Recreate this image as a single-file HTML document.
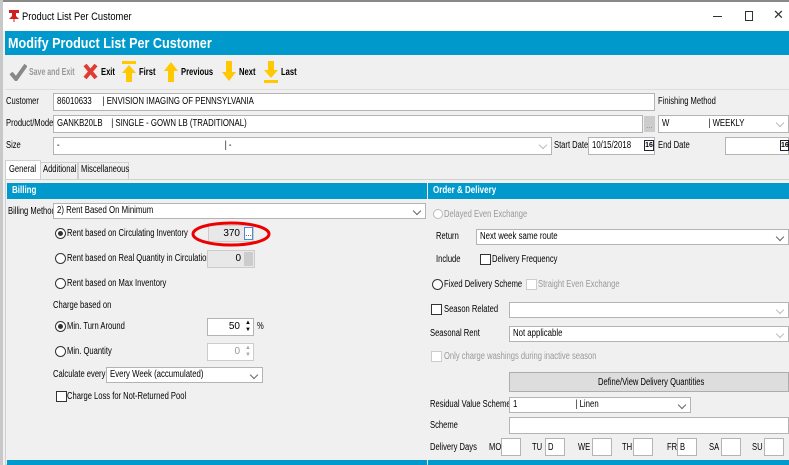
<!DOCTYPE html><html><head><style>
*{box-sizing:border-box;margin:0;padding:0}
body{width:789px;height:465px;overflow:hidden;background:#f0f0f0;font-family:"Liberation Sans",sans-serif;font-size:10px;color:#000;position:relative}
.a{position:absolute}
.t{position:absolute;white-space:nowrap;line-height:12px;transform:scaleX(.76);transform-origin:0 50%}
.in{position:absolute;background:#fff;border:1px solid #b4b4b4;height:18px}
.in span{position:absolute;left:3px;top:2px;white-space:nowrap;line-height:12px;transform:scaleX(.78);transform-origin:0 50%}
.dd:after{content:"";position:absolute;right:5px;top:4px;width:5px;height:5px;border-right:1px solid #666;border-bottom:1px solid #666;transform:rotate(45deg)}
.dd.g:after{border-color:#bbb}
.rb{position:absolute;width:11px;height:11px;border:1px solid #333;border-radius:50%;background:#fff}
.rb.on:after{content:"";position:absolute;left:2px;top:2px;width:5px;height:5px;border-radius:50%;background:#333}
.cb{position:absolute;width:11px;height:11px;border:1px solid #333;background:#fff}
.hdr{position:absolute;background:#0099cc;color:#fff;font-weight:bold;height:16px}
.hdr span{position:absolute;left:5px;top:2px;line-height:12px;transform:scaleX(.8);transform-origin:0 50%}
.g2{color:#999}
.bx{position:absolute;background:#fff;border:1px solid #b4b4b4;width:20px;height:18px;top:438px}
</style></head><body>
<div class="a" style="left:0;top:0;width:789px;height:31px;background:#fff;border-top:2px solid #888"></div>
<div class="a" style="left:0;top:0;width:3px;height:465px;background:#c8c8c8"></div>
<svg class="a" style="left:8px;top:9px" width="12" height="13"><path d="M1 1h10v3H8v3l3 3H1l3-3V4H1z" fill="#d02020"/><path d="M6 10v3" stroke="#d02020"/></svg>
<div class="t" style="left:22px;top:11px;font-size:11px;transform:scaleX(.85)">Product List Per Customer</div>
<div class="a" style="left:713px;top:16px;width:9px;height:1px;background:#333"></div>
<div class="a" style="left:745px;top:11px;width:8px;height:10px;border:1px solid #333"></div>
<div class="t" style="left:773px;top:9px;font-size:13px;transform:none;color:#333">✕</div>
<div class="a" style="left:5px;top:31px;width:784px;height:24px;background:#0099cc"></div>
<div class="t" style="left:8px;top:36px;font-size:15px;line-height:16px;font-weight:bold;color:#fff;transform:scaleX(.84)">Modify Product List Per Customer</div>
<svg class="a" style="left:9px;top:63px" width="18" height="18"><path d="M2 10l5 6L17 2" stroke="#888" stroke-width="4" fill="none"/></svg>
<div class="t g2" style="left:29px;top:67px;font-weight:bold;transform:scaleX(.7)">Save and Exit</div>
<svg class="a" style="left:83px;top:63px" width="15" height="17"><path d="M2 2l11 13M13 2L2 15" stroke="#e03c31" stroke-width="4"/></svg>
<div class="t" style="left:101px;top:67px;font-weight:bold">Exit</div>
<svg class="a" style="left:121px;top:60px" width="16" height="23"><rect x="1" y="1" width="14" height="3" fill="#ffc800"/><path d="M8 5l7 8h-4v9H5v-9H1z" fill="#ffc800"/></svg>
<div class="t" style="left:139px;top:67px;font-weight:bold">First</div>
<svg class="a" style="left:163px;top:61px" width="16" height="22"><path d="M8 1l7 9h-4v11H5V10H1z" fill="#ffc800"/></svg>
<div class="t" style="left:181px;top:67px;font-weight:bold">Previous</div>
<svg class="a" style="left:221px;top:60px" width="16" height="22"><path d="M8 21l7-9h-4V1H5v11H1z" fill="#ffc800"/></svg>
<div class="t" style="left:239px;top:67px;font-weight:bold">Next</div>
<svg class="a" style="left:263px;top:60px" width="16" height="24"><path d="M8 18l7-8h-4V1H5v9H1z" fill="#ffc800"/><rect x="1" y="20" width="14" height="3" fill="#ffc800"/></svg>
<div class="t" style="left:281px;top:67px;font-weight:bold">Last</div>
<div class="a" style="left:5px;top:89px;width:784px;height:1px;background:#ddd"></div>
<div class="t" style="left:6px;top:96px">Customer</div>
<div class="in" style="left:53px;top:93px;width:602px"><span>86010633 &nbsp;&nbsp;&nbsp;&nbsp;| ENVISION IMAGING OF PENNSYLVANIA</span></div>
<div class="t" style="left:658px;top:96px">Finishing Method</div>
<div class="t" style="left:6px;top:118px">Product/Model</div>
<div class="in" style="left:53px;top:115px;width:590px"><span>GANKB20LB &nbsp;&nbsp;&nbsp;| SINGLE - GOWN LB (TRADITIONAL)</span></div>
<div class="a" style="left:644px;top:116px;width:11px;height:16px;background:#ccc;color:#888;font-size:8px;text-align:center;line-height:20px">...</div>
<div class="in dd g" style="left:658px;top:115px;width:131px"><span>W &nbsp;&nbsp;&nbsp;&nbsp;&nbsp;&nbsp;&nbsp;&nbsp;&nbsp;&nbsp;&nbsp;&nbsp;&nbsp;&nbsp;&nbsp;&nbsp;&nbsp;| WEEKLY</span></div>
<div class="t" style="left:6px;top:140px">Size</div>
<div class="in dd g" style="left:53px;top:137px;width:499px"><span>- <span style="position:absolute;left:215px;top:0;transform:none">| -</span></span></div>
<div class="t" style="left:554px;top:140px">Start Date</div>
<div class="in" style="left:588px;top:137px;width:67px"><span>10/15/2018</span></div>
<div class="a" style="left:644px;top:140px;width:10px;height:11px;background:#fff;border:1px solid #223;font-size:7px;line-height:9px;text-align:center;font-weight:bold">16</div>
<div class="t" style="left:658px;top:140px">End Date</div>
<div class="in" style="left:725px;top:137px;width:64px"></div>
<div class="a" style="left:780px;top:140px;width:9px;height:11px;background:#fff;border:1px solid #223;font-size:7px;line-height:9px;font-weight:bold">16</div>
<div class="a" style="left:5px;top:160px;width:36px;height:20px;background:#fff;border:1px solid #d0d0d0;border-bottom:none"></div>
<div class="t" style="left:9px;top:164px">General</div>
<div class="a" style="left:40px;top:162px;width:38px;height:17px;border:1px solid #d0d0d0;border-bottom:none"></div>
<div class="t" style="left:43px;top:164px">Additional</div>
<div class="a" style="left:78px;top:162px;width:51px;height:17px;border:1px solid #d0d0d0;border-bottom:none"></div>
<div class="t" style="left:81px;top:164px">Miscellaneous</div>
<div class="a" style="left:5px;top:179px;width:784px;height:286px;border:1px solid #d0d0d0;border-right:none"></div>
<div class="hdr" style="left:7px;top:183px;width:420px"><span>Billing</span></div>
<div class="hdr" style="left:428px;top:183px;width:361px"><span>Order &amp; Delivery</span></div>
<div class="t" style="left:8px;top:206px">Billing Method</div>
<div class="in dd" style="left:53px;top:203px;width:373px;height:16px"><span style="top:1px">2) Rent Based On Minimum</span></div>
<div class="rb on" style="left:55px;top:228px"></div>
<div class="t" style="left:67px;top:228px">Rent based on Circulating Inventory</div>
<div class="a" style="left:208px;top:225px;width:46px;height:17px;background:#e8e8e8;border:1px solid #ccc;text-align:right;padding-right:13px;line-height:15px">370</div>
<div class="a" style="left:244px;top:227px;width:9px;height:13px;background:#fff;border:1px solid #4a8ad8;font-size:8px;line-height:12px;text-align:center">...</div>
<svg class="a" style="left:190px;top:219px" width="82" height="30"><ellipse cx="41" cy="15" rx="38" ry="11" fill="none" stroke="#e00" stroke-width="3"/></svg>
<div class="rb" style="left:55px;top:253px"></div>
<div class="t" style="left:67px;top:253px">Rent based on Real Quantity in Circulation</div>
<div class="a" style="left:207px;top:250px;width:48px;height:18px;background:#e8e8e8;border:1px solid #ccc;text-align:right;padding-right:13px;line-height:16px">0</div>
<div class="a" style="left:244px;top:252px;width:9px;height:14px;background:#ccc"></div>
<div class="rb" style="left:55px;top:278px"></div>
<div class="t" style="left:67px;top:278px">Rent based on Max Inventory</div>
<div class="t" style="left:53px;top:300px">Charge based on</div>
<div class="rb on" style="left:55px;top:321px"></div>
<div class="t" style="left:67px;top:321px">Min. Turn Around</div>
<div class="in" style="left:207px;top:318px;width:47px"><span style="left:auto;right:13px;transform:none">50</span></div>
<div class="a" style="left:245px;top:320px;font-size:6px;line-height:7px">▲<br>▼</div>
<div class="t" style="left:257px;top:321px">%</div>
<div class="rb" style="left:55px;top:346px"></div>
<div class="t" style="left:67px;top:346px">Min. Quantity</div>
<div class="in" style="left:207px;top:343px;width:47px;border-color:#ccc"><span style="left:auto;right:13px;transform:none;color:#999">0</span></div>
<div class="a" style="left:245px;top:345px;font-size:6px;line-height:7px;color:#aaa">▲<br>▼</div>
<div class="t" style="left:53px;top:369px">Calculate every</div>
<div class="in dd" style="left:106px;top:367px;width:157px;height:16px"><span style="top:1px">Every Week (accumulated)</span></div>
<div class="cb" style="left:56px;top:391px"></div>
<div class="t" style="left:67px;top:391px">Charge Loss for Not-Returned Pool</div>
<div class="rb" style="left:433px;top:209px;border-color:#bbb;width:10px;height:10px"></div>
<div class="t g2" style="left:444px;top:209px">Delayed Even Exchange</div>
<div class="t" style="left:436px;top:231px">Return</div>
<div class="in dd" style="left:476px;top:229px;width:313px;height:16px"><span style="top:1px">Next week same route</span></div>
<div class="t" style="left:436px;top:254px">Include</div>
<div class="cb" style="left:480px;top:254px"></div>
<div class="t" style="left:492px;top:254px">Delivery Frequency</div>
<div class="rb" style="left:432px;top:279px"></div>
<div class="t" style="left:444px;top:279px">Fixed Delivery Scheme</div>
<div class="cb" style="left:526px;top:279px;border-color:#ccc"></div>
<div class="t g2" style="left:538px;top:279px">Straight Even Exchange</div>
<div class="cb" style="left:431px;top:304px"></div>
<div class="t" style="left:444px;top:304px">Season Related</div>
<div class="in dd g" style="left:509px;top:302px;width:280px;height:16px"></div>
<div class="t" style="left:430px;top:328px">Seasonal Rent</div>
<div class="in dd g" style="left:509px;top:326px;width:280px;height:16px"><span style="top:1px">Not applicable</span></div>
<div class="cb" style="left:431px;top:351px;border-color:#ccc"></div>
<div class="t g2" style="left:444px;top:351px">Only charge washings during inactive season</div>
<div class="a" style="left:509px;top:372px;width:280px;height:20px;background:#ddd;border:1px solid #adadad"></div>
<div class="t" style="left:598px;top:377px">Define/View Delivery Quantities</div>
<div class="t" style="left:430px;top:399px">Residual Value Scheme</div>
<div class="in dd" style="left:509px;top:397px;width:182px;height:16px"><span style="top:1px">1 <span style="position:absolute;left:80px;top:0;transform:none">| Linen</span></span></div>
<div class="t" style="left:430px;top:420px">Scheme</div>
<div class="in" style="left:509px;top:417px;width:280px;height:17px"></div>
<div class="t" style="left:430px;top:442px">Delivery Days</div>
<div class="t" style="left:489px;top:442px">MO</div><div class="bx" style="left:501px"></div>
<div class="t" style="left:532px;top:442px">TU</div><div class="bx" style="left:545px"><span class="t" style="left:2px;top:3px">D</span></div>
<div class="t" style="left:578px;top:442px">WE</div><div class="bx" style="left:592px"></div>
<div class="t" style="left:622px;top:442px">TH</div><div class="bx" style="left:633px"></div>
<div class="t" style="left:667px;top:442px">FR</div><div class="bx" style="left:677px"><span class="t" style="left:2px;top:3px">B</span></div>
<div class="t" style="left:709px;top:442px">SA</div><div class="bx" style="left:721px"></div>
<div class="t" style="left:752px;top:442px">SU</div><div class="bx" style="left:764px"></div>
<div class="a" style="left:7px;top:460px;width:420px;height:5px;background:#0099cc"></div>
<div class="a" style="left:428px;top:460px;width:361px;height:5px;background:#0099cc"></div>
</body></html>
